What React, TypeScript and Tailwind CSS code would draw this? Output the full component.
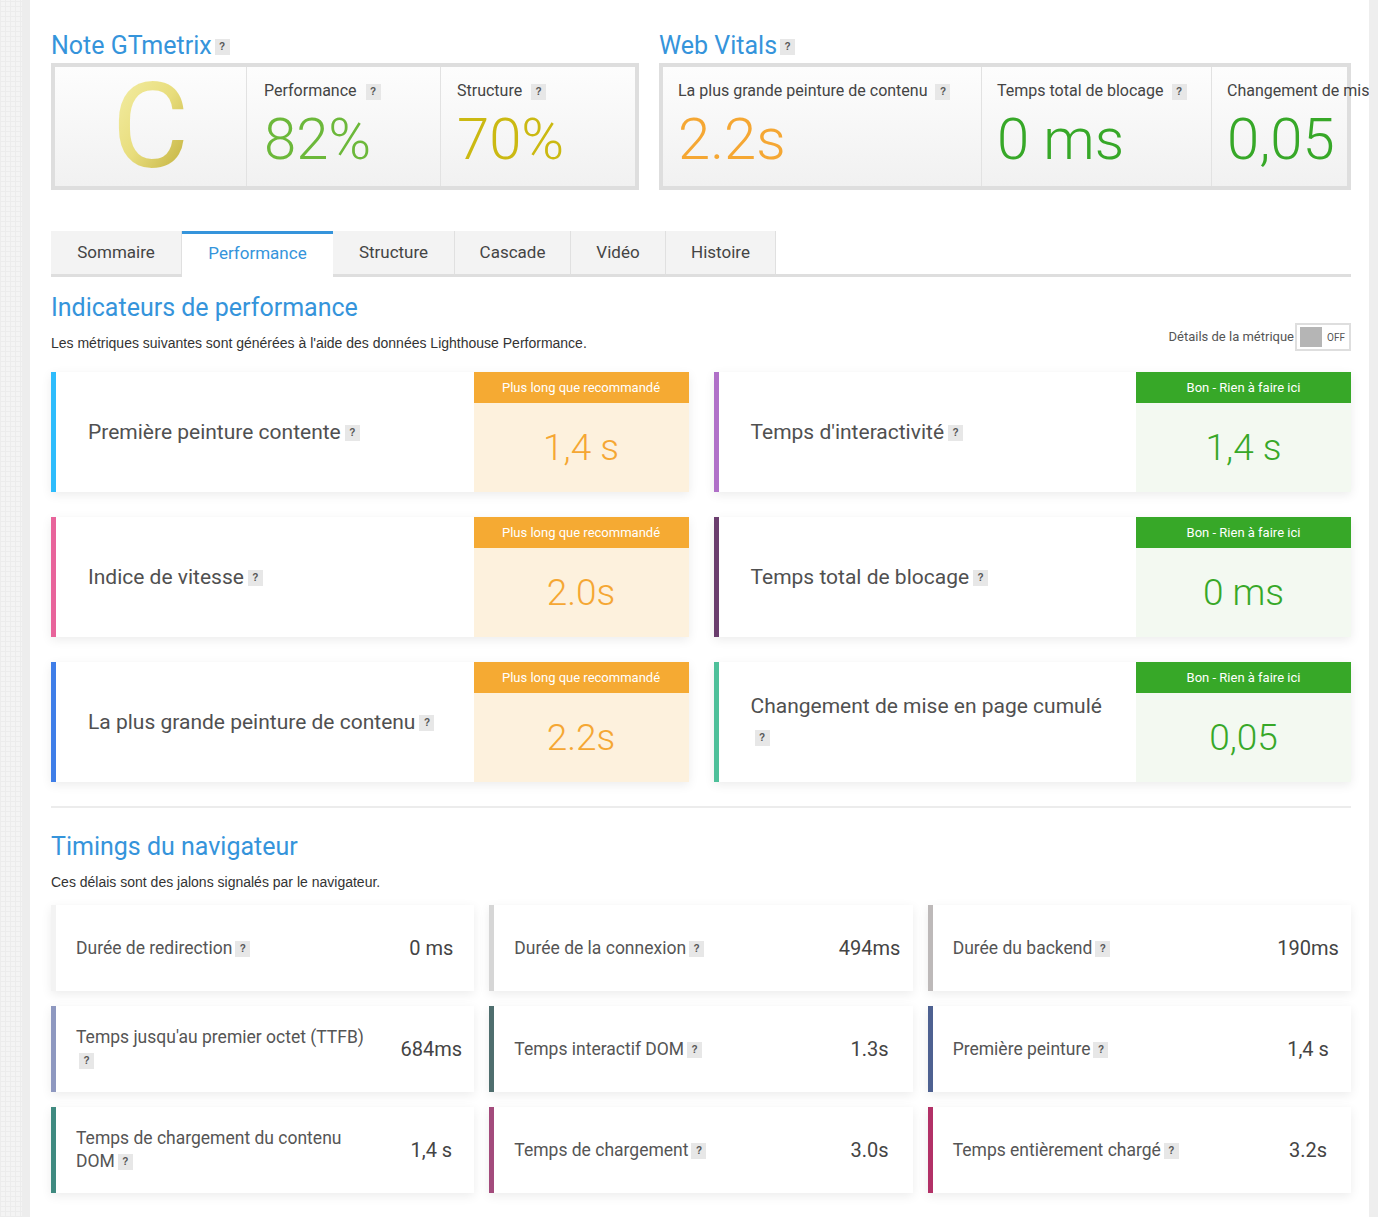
import React from "react";

const ui = "font-['Roboto','Noto_Sans',sans-serif]";

const Help = ({ className = "" }: { className?: string }) => (
  <span
    className={`inline-flex items-center justify-center w-[15px] h-[16px] bg-[#e7e7e7] text-[10px] font-bold text-[#555] leading-none align-middle font-['Liberation_Sans',sans-serif] ${className}`}
  >
    ?
  </span>
);

const metrics = [
  { label: "Première peinture contente", value: "1,4 s", bar: "border-[#2ebcfc]", good: false },
  { label: "Temps d'interactivité", value: "1,4 s", bar: "border-[#b070c8]", good: true },
  { label: "Indice de vitesse", value: "2.0s", bar: "border-[#e8649b]", good: false },
  { label: "Temps total de blocage", value: "0 ms", bar: "border-[#6b3e6e]", good: true },
  { label: "La plus grande peinture de contenu", value: "2.2s", bar: "border-[#3f7ee8]", good: false },
  { label: "Changement de mise en page cumulé", value: "0,05", bar: "border-[#4ec09a]", good: true },
];

const timings = [
  { label: "Durée de redirection", value: "0 ms", bar: "border-[#f3f3f3]" },
  { label: "Durée de la connexion", value: "494ms", bar: "border-[#d6d6d6]" },
  { label: "Durée du backend", value: "190ms", bar: "border-[#bdb9b9]" },
  { label: "Temps jusqu'au premier octet (TTFB)", value: "684ms", bar: "border-[#8e98c0]" },
  { label: "Temps interactif DOM", value: "1.3s", bar: "border-[#4f6e6e]" },
  { label: "Première peinture", value: "1,4 s", bar: "border-[#4e6191]" },
  { label: "Temps de chargement du contenu DOM", value: "1,4 s", bar: "border-[#3f8a80]" },
  { label: "Temps de chargement", value: "3.0s", bar: "border-[#a34b7c]" },
  { label: "Temps entièrement chargé", value: "3.2s", bar: "border-[#b23167]" },
];

const tabs = [
  { name: "Sommaire", w: "w-[131px]" },
  { name: "Performance", w: "w-[151px]" },
  { name: "Structure", w: "w-[122px]" },
  { name: "Cascade", w: "w-[116px]" },
  { name: "Vidéo", w: "w-[95px]" },
  { name: "Histoire", w: "w-[110px]" },
];

const MetricCard = ({ m }: { m: (typeof metrics)[number] }) => (
  <div className={`flex h-[120px] bg-white border-l-[5px] ${m.bar} shadow-[0_3px_10px_rgba(0,0,0,0.08)]`}>
    <div className="flex-1 flex items-center pl-[32px] pr-[26px] text-[21px] text-[#505050] leading-[31px]">
      <div>
        {m.label}
        <Help className="ml-[4px]" />
      </div>
    </div>
    <div className="w-[215px] shrink-0 flex flex-col">
      <div
        className={`h-[31px] flex items-center justify-center text-[13px] text-white ${
          m.good ? "bg-[#37a828]" : "bg-[#f5aa33]"
        }`}
      >
        {m.good ? "Bon - Rien à faire ici" : "Plus long que recommandé"}
      </div>
      <div
        className={`flex-1 flex items-center justify-center text-[37px] font-light ${
          m.good ? "bg-[#f3f9f1] text-[#37a828]" : "bg-[#fdf1dd] text-[#f5a733]"
        }`}
      >
        {m.value}
      </div>
    </div>
  </div>
);

const TimingCard = ({ t }: { t: (typeof timings)[number] }) => (
  <div className={`flex items-center h-[86px] bg-white border-l-[5px] ${t.bar} shadow-[0_3px_10px_rgba(0,0,0,0.08)]`}>
    <div className="flex-1 pl-[20px] pr-[17px] text-[17.5px] leading-[23px] text-[#555]">
      {t.label}
      <Help className="ml-[3px]" />
    </div>
    <div className="w-[86px] shrink-0 text-center text-[20px] text-[#444]">{t.value}</div>
  </div>
);

export default function App() {
  return (
    <div className={`flex min-h-[1217px] w-full overflow-hidden bg-white ${ui}`}>
      <div className="w-[22px] shrink-0 bg-[#f4f4f4] bg-[repeating-linear-gradient(0deg,#ececec_0_1px,transparent_1px_5px),repeating-linear-gradient(90deg,#ececec_0_1px,transparent_1px_5px)]" />
      <div className="w-[8px] shrink-0 bg-[#ededed]" />
      <main className="flex-1 min-w-0 pl-[21px] pr-[18px] pt-[31px] pb-[24px]">
        {/* top scores */}
        <div className="flex gap-[20px]">
          <div className="w-[588px] shrink-0">
            <h2 className="text-[25px] leading-[30px] text-[#3594db] mb-[2px]">
              Note GTmetrix
              <Help className="ml-[3px] w-[13px]" />
            </h2>
            <div className="flex h-[127px] border-4 border-[#dedede] bg-linear-to-b from-[#fdfdfd] to-[#f1f1f1]">
              <div className="w-[192px] flex items-center justify-center border-r border-[#e2e2e2]">
                <span className="text-[118px] leading-none bg-linear-to-br from-[#f5f0aa] via-[#e8dd7c] to-[#bba82a] bg-clip-text text-transparent">
                  C
                </span>
              </div>
              <div className="w-[194px] pl-[17px] pt-[14px] border-r border-[#e2e2e2]">
                <div className="text-[16px] leading-[20px] text-[#444]">
                  Performance
                  <Help className="ml-[9px]" />
                </div>
                <div className="mt-[9px] text-[58px] leading-[58px] font-light text-[#6cb83a]">82%</div>
              </div>
              <div className="flex-1 pl-[16px] pt-[14px]">
                <div className="text-[16px] leading-[20px] text-[#444]">
                  Structure
                  <Help className="ml-[9px]" />
                </div>
                <div className="mt-[9px] text-[58px] leading-[58px] font-light text-[#cbb912]">70%</div>
              </div>
            </div>
          </div>
          <div className="flex-1 min-w-0">
            <h2 className="text-[25px] leading-[30px] text-[#3594db] mb-[2px]">
              Web Vitals
              <Help className="ml-[3px] w-[13px]" />
            </h2>
            <div className="flex h-[127px] border-4 border-[#dedede] bg-linear-to-b from-[#fdfdfd] to-[#f1f1f1]">
              <div className="w-[319px] shrink-0 pl-[15px] pt-[14px] border-r border-[#e2e2e2]">
                <div className="text-[16px] leading-[20px] text-[#444]">
                  La plus grande peinture de contenu
                  <Help className="ml-[8px]" />
                </div>
                <div className="mt-[9px] text-[58px] leading-[58px] font-light text-[#f5a733]">2.2s</div>
              </div>
              <div className="w-[230px] shrink-0 pl-[15px] pt-[14px] border-r border-[#e2e2e2]">
                <div className="text-[16px] leading-[20px] text-[#444]">
                  Temps total de blocage
                  <Help className="ml-[8px]" />
                </div>
                <div className="mt-[9px] text-[58px] leading-[58px] font-light text-[#37a828]">0 ms</div>
              </div>
              <div className="flex-1 min-w-0 pl-[15px] pt-[14px] whitespace-nowrap">
                <div className="text-[16px] leading-[20px] text-[#444]">
                  Changement de mise en page cumulé
                  <Help className="ml-[8px]" />
                </div>
                <div className="mt-[9px] text-[58px] leading-[58px] font-light text-[#37a828]">0,05</div>
              </div>
            </div>
          </div>
        </div>

        {/* tabs */}
        <div className="flex items-end h-[46px] mt-[41px]">
          {tabs.map((t) =>
            t.name === "Performance" ? (
              <div
                key={t.name}
                className={`${t.w} h-[46px] flex items-center justify-center bg-white border-t-[3px] border-[#3594db] text-[17px] text-[#3594db] pb-[3px]`}
              >
                {t.name}
              </div>
            ) : (
              <div
                key={t.name}
                className={`${t.w} h-[46px] flex items-center justify-center bg-[#f3f3f3] border-r border-[#e0e0e0] border-b-[3px] border-b-[#dedede] text-[17px] text-[#444]`}
              >
                {t.name}
              </div>
            )
          )}
          <div className="flex-1 border-b-[3px] border-[#dedede]" />
        </div>

        {/* performance metrics */}
        <h2 className="mt-[15px] text-[25px] leading-[31px] text-[#3594db]">Indicateurs de performance</h2>
        <div className="flex justify-between items-end h-[28px]">
          <p className="text-[14px] leading-[20px] text-[#333] mb-[-2px] font-['Liberation_Sans',sans-serif]">
            Les métriques suivantes sont générées à l'aide des données Lighthouse Performance.
          </p>
          <div className="flex items-center">
            <span className="text-[13px] text-[#555]">Détails de la métrique</span>
            <div className="ml-[1px] w-[56px] h-[28px] border-2 border-[#dedede] flex items-center px-[3px] bg-white">
              <div className="w-[22px] h-[20px] bg-[#b5b5b5]" />
              <span className="ml-[5px] text-[10px] text-[#555]">OFF</span>
            </div>
          </div>
        </div>

        <div className="mt-[21px] grid grid-cols-2 gap-x-[25px] gap-y-[25px]">
          {metrics.map((m) => (
            <MetricCard key={m.label} m={m} />
          ))}
        </div>

        <div className="mt-[24px] h-[2px] bg-[#ececec]" />

        {/* browser timings */}
        <h2 className="mt-[23px] text-[25px] leading-[32px] text-[#3594db]">Timings du navigateur</h2>
        <p className="mt-[9px] text-[14px] leading-[20px] text-[#333] font-['Liberation_Sans',sans-serif]">
          Ces délais sont des jalons signalés par le navigateur.
        </p>
        <div className="mt-[13px] grid grid-cols-3 gap-x-[15px] gap-y-[15px]">
          {timings.map((t) => (
            <TimingCard key={t.label} t={t} />
          ))}
        </div>
      </main>
      <div className="w-[9px] shrink-0 bg-[#eeeeee]" />
    </div>
  );
}
